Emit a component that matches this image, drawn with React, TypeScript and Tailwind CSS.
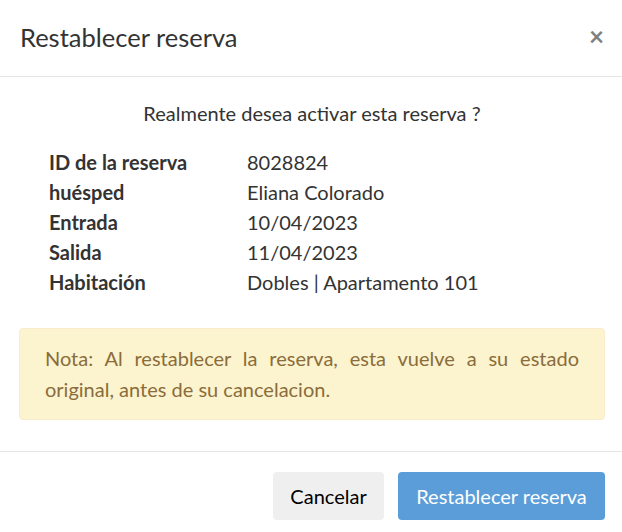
import React from 'react';

const rows: [string, string][] = [
  ['ID de la reserva', '8028824'],
  ['huésped', 'Eliana Colorado'],
  ['Entrada', '10/04/2023'],
  ['Salida', '11/04/2023'],
  ['Habitación', 'Dobles | Apartamento 101'],
];

export default function App() {
  return (
    <div className="w-[622px] h-[532px] overflow-hidden bg-white text-[#333] font-['Lato',sans-serif]">
      <div className="flex items-center justify-between h-[77px] pl-[20px] pr-[18px] border-b border-[#e5e5e5]">
        <h4 className="text-[25.5px] leading-none pb-[1px]">Restablecer reserva</h4>
        <button className="text-[26px] leading-none font-bold text-[#808080] -mt-[4px]">×</button>
      </div>

      <div className="pl-[19px] pr-[17px] pt-[21px] pb-[31px]">
        <p className="text-center text-[20px] leading-[30px]">Realmente desea activar esta reserva ?</p>
        <div className="mt-[19px] pl-[30px]">
          {rows.map(([label, value]) => (
            <div key={label} className="flex text-[20px] leading-[30px]">
              <span className="w-[198px] font-bold">{label}</span>
              <span>{value}</span>
            </div>
          ))}
        </div>
        <div className="mt-[31px] h-[92px] rounded-[4px] border border-[#faebcc] bg-[#fcf3cf] px-[25px] py-[14px] text-[20px] leading-[31px] text-[#8a6d3b] text-justify">
          Nota: Al restablecer la reserva, esta vuelve a su estado original, antes de su cancelacion.
        </div>
      </div>

      <div className="flex justify-end gap-[14px] border-t border-[#e5e5e5] pt-[20px] pr-[17px]">
        <button className="h-[48px] w-[111px] rounded-[4px] bg-[#efefef] text-[20px] text-black">Cancelar</button>
        <button className="h-[48px] w-[207px] rounded-[4px] bg-[#5b9dd9] text-[20px] text-white">Restablecer reserva</button>
      </div>
    </div>
  );
}
